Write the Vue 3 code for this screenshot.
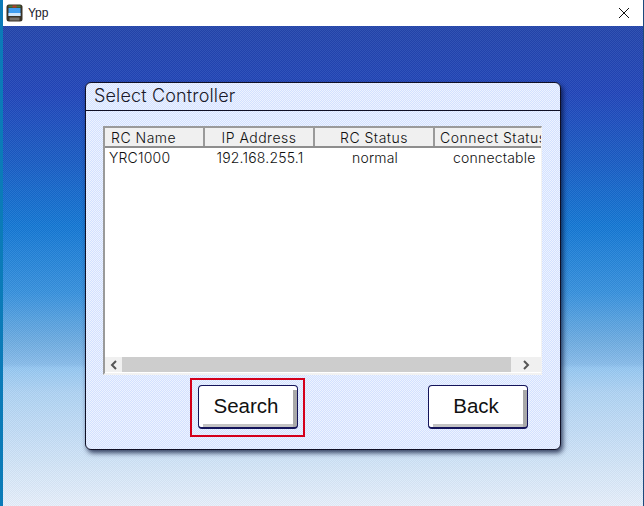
<script setup>
const columns = [
  { label: "RC Name", width: 100, cls: "left" },
  { label: "IP Address", width: 110 },
  { label: "RC Status", width: 120 },
  { label: "Connect Status", width: 107, cls: "last" },
];
const row = ["YRC1000", "192.168.255.1", "normal", "connectable"];
</script>

<template>
  <div class="window">
    <header class="titlebar">
      <svg class="app-icon" width="18" height="18" viewBox="0 0 18 18" aria-hidden="true">
        <rect x="0.5" y="0.5" width="16" height="17" rx="2.5" fill="#3a3226" />
        <rect x="2.5" y="1.5" width="12" height="2" fill="#4a7a3a" />
        <rect x="6.5" y="1.5" width="4" height="2" fill="#b83a2a" />
        <rect x="2.5" y="4" width="12" height="8" fill="#3f9df0" />
        <rect x="2.5" y="9" width="12" height="3" fill="#cfe6fb" />
        <rect x="3.5" y="13.5" width="10" height="3" fill="#77716a" />
      </svg>
      <span class="app-name">Ypp</span>
      <svg class="close" width="12" height="12" viewBox="0 0 12 12" aria-hidden="true">
        <path d="M1 1L11 11M11 1L1 11" stroke="#111" stroke-width="1" fill="none" />
      </svg>
    </header>

    <main class="desktop">
      <section class="panel">
        <h1 class="panel-title">Select Controller</h1>
        <div class="panel-body">
          <div class="table">
            <div class="table-view">
              <div class="thead">
                <div
                  v-for="col in columns"
                  :key="col.label"
                  class="th"
                  :class="col.cls"
                  :style="{ width: col.width + 'px' }"
                >
                  {{ col.label }}
                </div>
              </div>
              <div class="tbody">
                <div
                  v-for="(cell, i) in row"
                  :key="cell"
                  class="td"
                  :class="columns[i].cls"
                  :style="{ width: columns[i].width + 'px' }"
                >
                  {{ cell }}
                </div>
              </div>
            </div>
            <div class="scrollbar">
              <span class="arrow">
                <svg width="8" height="10" viewBox="0 0 8 10" aria-hidden="true">
                  <path d="M6 1L2 5L6 9" stroke="#555" stroke-width="2" fill="none" />
                </svg>
              </span>
              <span class="thumb"></span>
              <span class="arrow">
                <svg width="8" height="10" viewBox="0 0 8 10" aria-hidden="true">
                  <path d="M2 1L6 5L2 9" stroke="#555" stroke-width="2" fill="none" />
                </svg>
              </span>
            </div>
          </div>

          <div class="actions">
            <div class="highlight">
              <button type="button" class="btn">Search</button>
            </div>
            <button type="button" class="btn">Back</button>
          </div>
        </div>
      </section>
    </main>
  </div>
</template>

<style>
html,
body {
  margin: 0;
  overflow: hidden;
}
</style>

<style scoped>
.window {
  width: 644px;
  height: 506px;
  box-sizing: border-box;
  display: flex;
  flex-direction: column;
  border-left: 3px solid #0b7bb8;
  border-right: 1px solid #1c4a7c;
  font-family: Inter, "Liberation Sans", sans-serif;
  font-weight: 300;
  color: #111;
}

.titlebar {
  height: 25px;
  flex: none;
  display: flex;
  align-items: center;
  background: #fff;
  padding: 0 10px 1px 3px;
}

.app-icon {
  flex: none;
}

.app-name {
  margin-left: 4px;
  font-family: "Liberation Sans", Arial, sans-serif;
  font-weight: 400;
  font-size: 12px;
  color: #1a1a2a;
}

.close {
  margin-left: auto;
  margin-right: 3px;
}

.desktop {
  flex: 1;
  box-sizing: border-box;
  padding: 56px 81px 0 82px;
  background-image:
    repeating-conic-gradient(rgba(255, 255, 255, 0.07) 0 25%, rgba(0, 0, 40, 0.04) 0 50%),
    linear-gradient(
      to bottom,
      #2346ac 0,
      #2146ba 67px,
      #1a5cc4 133px,
      #1478d4 200px,
      #3892de 267px,
      #70aee2 317px,
      #88bcea 338px,
      #96c8f2 342px,
      #b0d4f4 367px,
      #d0e4f8 433px,
      #e8f0fc 481px
    );
  background-size: 2px 2px, 100% 100%;
}

.panel {
  width: 476px;
  height: 368px;
  box-sizing: border-box;
  border: 1px solid #101025;
  border-radius: 6px;
  background-image: repeating-conic-gradient(rgba(255, 255, 255, 0.45) 0 25%, rgba(190, 210, 255, 0.35) 0 50%);
  background-size: 2px 2px;
  background-color: #dfe9ff;
  box-shadow: 2px 3px 5px rgba(5, 15, 50, 0.75);
}

.panel-title {
  margin: 0;
  height: 28px;
  box-sizing: border-box;
  padding: 0 0 0 8px;
  border-bottom: 1px solid #101025;
  font-size: 18px;
  line-height: 25px;
  font-weight: 300;
  letter-spacing: 0.15px;
  color: #1a1a2a;
}

.panel-body {
  padding: 15px 18px 0 17px;
}

.table {
  width: 439px;
  height: 249px;
  box-sizing: border-box;
  display: flex;
  flex-direction: column;
  border-top: 2px solid #9a9a9a;
  border-left: 2px solid #9a9a9a;
  border-right: 1px solid #f2f2f2;
  border-bottom: 2px solid #f2f2f2;
  background: #fff;
}

.table-view {
  flex: 1;
  overflow: hidden;
}

.thead {
  display: flex;
  height: 20px;
  box-sizing: border-box;
  background: #f0f0f0;
  border-bottom: 2px solid #8e8e8e;
}

.th {
  flex: none;
  box-sizing: border-box;
  border-right: 2px solid #9a9a9a;
  font-size: 14px;
  line-height: 20px;
  text-align: center;
  white-space: nowrap;
  overflow: hidden;
  letter-spacing: 0.5px;
}

.th.last {
  border-right: none;
  padding-left: 5px;
  text-align: left;
}

.th.left {
  text-align: left;
  padding-left: 6px;
}

.tbody {
  display: flex;
  padding-top: 1px;
}

.td {
  flex: none;
  box-sizing: border-box;
  font-size: 14px;
  line-height: 18px;
  text-align: center;
  white-space: nowrap;
  letter-spacing: 0.2px;
}

.td.left {
  text-align: left;
  padding-left: 4px;
}

.td.last {
  text-align: left;
  padding-left: 18px;
}

.scrollbar {
  flex: none;
  height: 15px;
  margin-bottom: 1px;
  display: flex;
  background: #f0f0f0;
}

.arrow {
  flex: none;
  width: 17px;
  display: flex;
  align-items: center;
  justify-content: center;
}

.thumb {
  width: 389px;
  flex: none;
  background: #cdcdcd;
}

.scrollbar .arrow:last-child {
  flex: 1;
}

.actions {
  display: flex;
  align-items: flex-start;
  padding: 3px 0 0 87px;
}

.highlight {
  padding: 5px 5px 6px 6px;
  border: 2px solid #d4001a;
}

.actions > .btn {
  margin: 7px 0 0 123px;
}

.btn {
  display: block;
  width: 100px;
  height: 44px;
  padding: 0 4px 2px 0;
  border: 1px solid #14145a;
  border-bottom-width: 2px;
  border-radius: 4px;
  background:
    linear-gradient(#a8a8a8, #a8a8a8) right 0 bottom 0 / 4px 37px no-repeat,
    linear-gradient(#c4c4c4, #c4c4c4) left 4px bottom 0 / 100% 3px no-repeat,
    #fff;
  font-family: "Liberation Sans", Arial, sans-serif;
  font-weight: 400;
  font-size: 20.5px;
  color: #111;
}
</style>
